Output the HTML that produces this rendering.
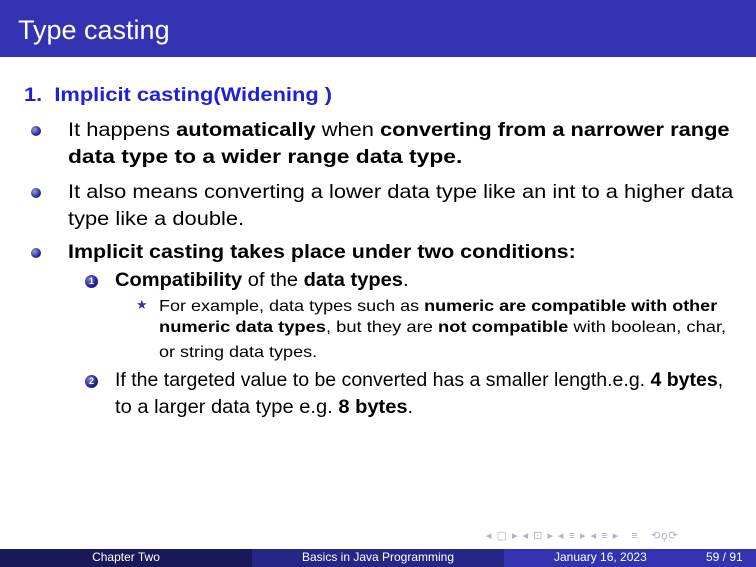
<!DOCTYPE html>
<html><head><meta charset="utf-8"><style>
body{margin:0;width:756px;height:567px;position:relative;overflow:hidden;background:#fff;font-family:"Liberation Sans",sans-serif;color:#000}
.l{position:absolute;white-space:nowrap;font-size:19.5px;line-height:1;transform:scaleX(1.12);transform-origin:0 0}
.s{font-size:16px;transform:scaleX(1.125)}
b{font-weight:bold}
.bul{position:absolute;width:10px;height:10px;border-radius:50%;background:radial-gradient(circle at 35% 35%,#9a9ae0,#2a2a90 60%,#14145a)}
.num{position:absolute;width:13px;height:13px;border-radius:50%;background:radial-gradient(circle at 35% 35%,#7a7ad0,#22228a 60%,#14145a);color:#fff;font-size:9px;font-weight:bold;text-align:center;line-height:13px}
.ft{position:absolute;top:549px;height:18px;font-size:12px;color:#fff;line-height:17px;text-align:center}
</style></head><body>
<div style="position:absolute;left:0;top:0;width:756px;height:57px;background:#3333b2"></div>
<div class="l" style="left:18px;top:17px;font-size:27px;color:#fff;transform:none">Type casting</div>
<div class="l" style="left:24px;top:86px;color:#2020d8;font-weight:bold">1. &nbsp;Implicit casting(Widening )</div>

<div class="bul" style="left:31px;top:126px"></div>
<div class="l" style="left:68px;top:121px">It happens <b>automatically</b> when <b>converting from a narrower range</b></div>
<div class="l" style="left:68px;top:148px;transform:scaleX(1.17)"><b>data type to a wider range data type.</b></div>

<div class="bul" style="left:31px;top:188px"></div>
<div class="l" style="left:68px;top:183px">It also means converting a lower data type like an int to a higher data</div>
<div class="l" style="left:68px;top:210px">type like a double.</div>

<div class="bul" style="left:31px;top:248px"></div>
<div class="l" style="left:68px;top:243px;transform:scaleX(1.1)"><b>Implicit casting takes place under two conditions:</b></div>

<div class="num" style="left:85px;top:275px">1</div>
<div class="l" style="left:115px;top:271px;transform:scaleX(1.03)"><b>Compatibility</b> of the <b>data types</b>.</div>

<div class="l" style="left:136px;top:298px;color:#3333b2;font-size:13px;transform:none">★</div>
<div class="l s" style="left:159px;top:299px">For example, data types such as <b>numeric are compatible with other</b></div>
<div class="l s" style="left:159px;top:320px;transform:scaleX(1.145)"><b>numeric data types</b>, but they are <b>not compatible</b> with boolean, char,</div>
<div class="l s" style="left:159px;top:345px">or string data types.</div>

<div class="num" style="left:85px;top:375px">2</div>
<div class="l" style="left:115px;top:371px;transform:scaleX(1.0)">If the targeted value to be converted has a smaller length.e.g. <b>4 bytes</b>,</div>
<div class="l" style="left:115px;top:398px;transform:scaleX(1.03)">to a larger data type e.g. <b>8 bytes</b>.</div>

<div class="l" style="left:486px;top:531px;font-size:11px;color:#b0b0d0;letter-spacing:1px;transform:none">◂ ▢ ▸ ◂ ⊡ ▸ ◂ ≡ ▸ ◂ ≡ ▸ &nbsp;&nbsp;≡ &nbsp;&nbsp;⟲ϙ⟳</div>

<div class="ft" style="left:0;width:252px;background:#191959">Chapter Two</div>
<div class="ft" style="left:252px;width:252px;background:#262686">Basics in Java Programming</div>
<div class="ft" style="left:504px;width:252px;background:#3333b2"><span style="position:absolute;left:50px">January 16, 2023</span><span style="position:absolute;left:202px">59 / 91</span></div>
</body></html>
